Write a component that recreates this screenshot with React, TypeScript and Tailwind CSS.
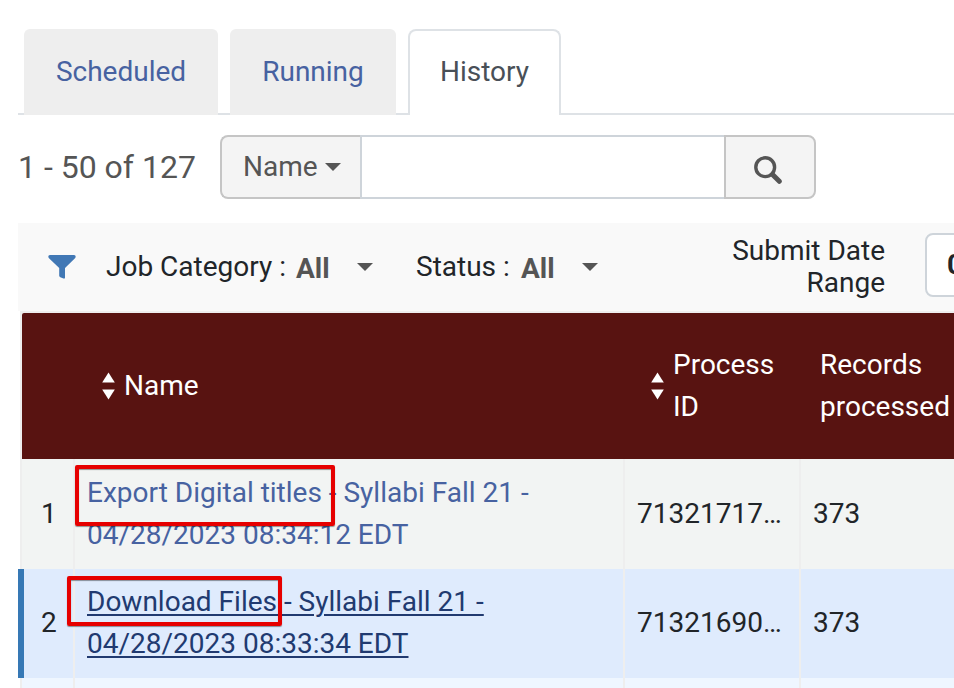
import type { ReactNode } from 'react';

function Caret() {
  return (
    <svg className="block h-2 w-4 shrink-0" viewBox="0 0 16 8">
      <path d="M0 0h16L8 8z" fill="#555" />
    </svg>
  );
}

function SortIcon() {
  return (
    <svg className="block h-7 w-[13px] shrink-0" viewBox="0 0 13 28" fill="#fff">
      <path d="M6.5 0.500 12.800 10.5H.2z" />
      <path d="M6.5 27.500.2 17.5h12.600z" />
    </svg>
  );
}

function SearchIcon() {
  return (
    <svg className="block h-7 w-7" viewBox="0 0 28 28" fill="none" stroke="#555">
      <circle cx="11.200" cy="11.200" r="9.4" strokeWidth="3.4" />
      <path d="M18.5 18.5 25.3 25.3" strokeWidth="5" strokeLinecap="round" />
    </svg>
  );
}

function FilterIcon() {
  return (
    <svg className="block h-6 w-7 shrink-0" viewBox="0 0 28 24">
      <path
        d="M2 0h24c1.700 0 2.200 2 1 3.200L17 13v9.600c0 .9-.7 1.300-1.500.9l-3.200-1.300c-.8-.4-1.100-.8-1.100-1.600V13L1 3.200C-.2 2 .3 0 2 0z"
        fill="#4178b5"
      />
    </svg>
  );
}

type RowProps = { n: number; top: ReactNode; bottom: string; id: string; records: string; active?: boolean };

function Row({ n, top, bottom, id, records, active }: RowProps) {
  return (
    <div
      className={
        active
          ? 'flex h-[109px] border-l-[6px] border-[#3678b5] bg-[#dfebfd]'
          : 'ml-[2px] flex h-[110px] border-l-2 border-[#eee] bg-[#f2f4f3]'
      }
    >
      <div
        className={
          active
            ? 'flex w-[51px] items-center border-r-2 border-[#eee] pb-[2px] pl-[17px]'
            : 'flex w-[53px] items-center border-r-2 border-[#eee] pl-[19px]'
        }
      >
        {n}
      </div>
      <div
        className={
          active
            ? 'w-[550px] border-r-2 border-[#eee] pt-3 pl-3 text-[#213a70] underline decoration-2 underline-offset-[3px]'
            : 'w-[550px] border-r-2 border-[#eee] pt-[13px] pl-3 text-[#4762a1]'
        }
      >
        {top}
        <br />
        {bottom}
      </div>
      <div className={active ? 'flex w-[176px] items-center border-r-2 border-[#eee] pb-[2px] pl-3' : 'flex w-[176px] items-center border-r-2 border-[#eee] pl-3'}>
        {id}
      </div>
      <div className={active ? 'flex items-center pb-[2px] pl-3' : 'flex items-center pl-3'}>{records}</div>
    </div>
  );
}

export default function App() {
  return (
    <div className="relative h-[688px] w-[954px] overflow-hidden bg-white pl-[18px] font-[Roboto,sans-serif] text-[28px] leading-[42px] text-[#212529]">
      <nav className="mt-[29px] flex h-[86px] pl-[6px] shadow-[inset_0_-2px_0_#dee2e6]">
        <div className="mr-3 w-[194px] rounded-t-md bg-[#eee] pt-[22px] text-center text-[#4762a1]">Scheduled</div>
        <div className="mr-3 w-[166px] rounded-t-md bg-[#eee] pt-[22px] text-center text-[#4762a1]">Running</div>
        <div className="w-[153px] rounded-t-lg border-2 border-b-0 border-[#dee2e6] bg-white pt-5 text-center text-[#495057]">
          History
        </div>
      </nav>

      <div className="mt-5 flex h-16">
        <div className="w-[202px] text-[32px] leading-[64px] text-[#555]">1 - 50 of 127</div>
        <div className="flex w-[140px] items-center gap-[7px] rounded-l-lg border-2 border-r-0 border-[#c5c5c5] bg-[#f4f4f4] pl-[21px] text-[#555]">
          Name
          <Caret />
        </div>
        <div className="w-[364px] border-2 border-r-0 border-[#ced4da] bg-white" />
        <div className="flex w-[92px] items-center rounded-r-lg border-2 border-[#c5c5c5] bg-[#f4f4f4] pt-[6px] pl-7">
          <SearchIcon />
        </div>
      </div>

      <div className="mt-6 flex h-[88px] w-[1150px] items-center bg-[#f9f9f9] pl-[30px]">
        <FilterIcon />
        <span className="ml-[30px] w-[190px] shrink-0 whitespace-nowrap">Job Category :</span>
        <b className="mt-1 w-[61px] shrink-0 text-[#555]">All</b>
        <Caret />
        <span className="ml-[43px] w-[105px] shrink-0 whitespace-nowrap">Status :</span>
        <b className="mt-1 w-[61px] shrink-0 text-[#555]">All</b>
        <Caret />
        <span className="ml-[107px] w-[180px] shrink-0 text-right leading-8">
          Submit Date
          <br />
          Range
        </span>
        <div className="mb-1 ml-10 flex h-16 w-[180px] shrink-0 items-center rounded-lg border-2 border-[#ced4da] bg-white pl-5 font-bold">
          04
        </div>
      </div>

      <div className="ml-[2px] h-[148px] border-t-2 border-l-2 border-[#eee]">
        <div className="flex h-[146px] items-center rounded-tl-[2px] bg-[#581311] text-white">
          <div className="flex w-[603px] items-center gap-[9px] pl-20">
            <SortIcon />
            Name
          </div>
          <div className="flex w-[176px] items-center gap-[9px] pl-1">
            <div className="ml-[22px]">
              <SortIcon />
            </div>
            <span>
              Process
              <br />
              ID
            </span>
          </div>
          <div className="pl-[19px]">
            Records
            <br />
            processed
          </div>
        </div>
      </div>

      <Row n={1} top="Export Digital titles - Syllabi Fall 21 -" bottom="04/28/2023 08:34:12 EDT" id="71321717…" records="373" />
      <Row n={2} top="Download Files - Syllabi Fall 21 -" bottom="04/28/2023 08:33:34 EDT" id="71321690…" records="373" active />
      <div className="ml-[2px] flex h-[10px] border-l-2 border-[#eee] bg-[#eff6ff]">
        <div className="w-[53px] border-r-2 border-[#eee]" />
        <div className="w-[550px] border-r-2 border-[#eee]" />
        <div className="w-[176px] border-r-2 border-[#eee]" />
      </div>

      <div className="absolute top-[465px] left-[75px] h-[61px] w-[260px] rounded-[2px] border-4 border-[#e60000] shadow-[0_1px_1px_#0006,inset_0_1px_1px_#0006]" />
      <div className="absolute top-[576px] left-[67px] h-[50px] w-[215px] rounded-[2px] border-4 border-[#e60000] shadow-[0_1px_1px_#0006,inset_0_1px_1px_#0006]" />
    </div>
  );
}
